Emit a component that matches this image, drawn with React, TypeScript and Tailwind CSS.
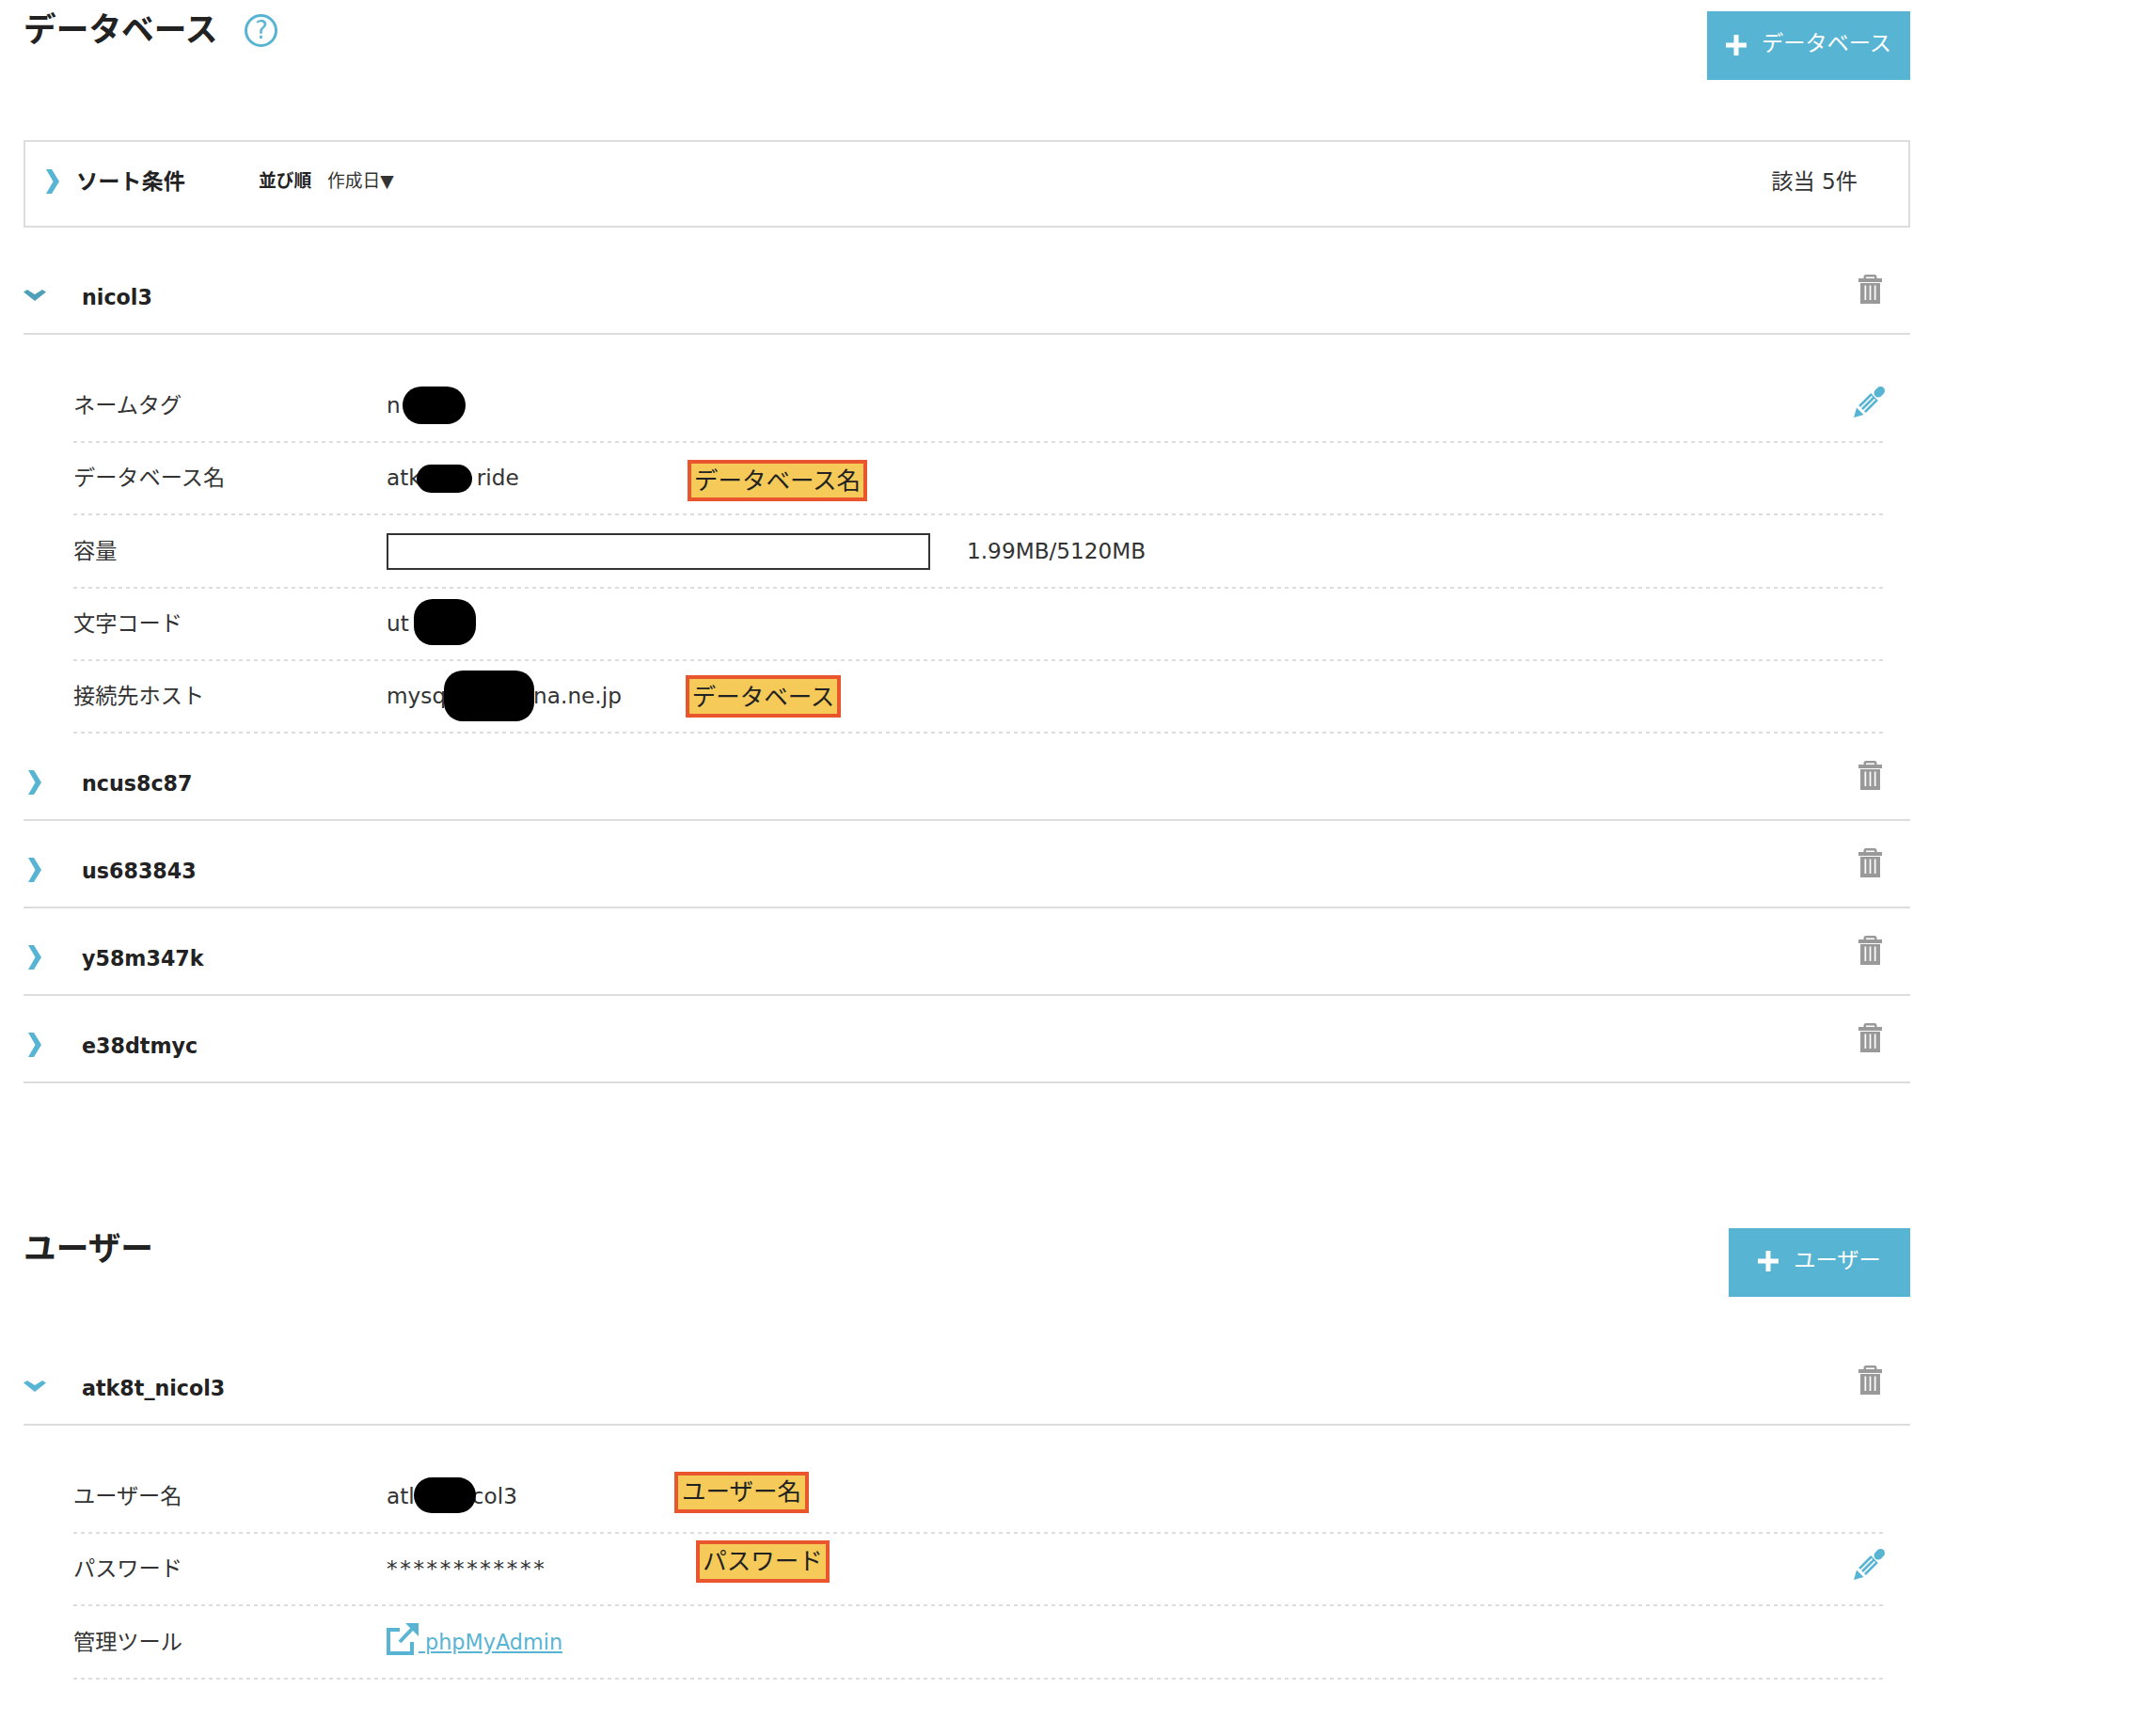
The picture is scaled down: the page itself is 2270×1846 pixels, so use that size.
import type { ReactNode } from "react";

const TrashIcon = () => (
  <svg width="25" height="31" viewBox="0 0 25 31" className="shrink-0">
    <path fill="#999" fillRule="evenodd" d="M8 0h9a2.500 2.500 0 0 1 2.500 2.500V4H25v4H0V4h5.500V2.500A2.500 2.500 0 0 1 8 0zM8 2.500V4h9V2.500z" />
    <path fill="#999" fillRule="evenodd" d="M2 9h21v22H2zM6.500 11.500v15.500h1.700V11.500zM11.650 11.500v15.500h1.700V11.500zM16.800 11.500v15.500h1.700V11.500z" />
  </svg>
);

const PencilIcon = () => (
  <svg width="33" height="33" viewBox="0 0 33 33" className="shrink-0">
    <path d="M26 7L28.500 4.500" stroke="#58b4d3" strokeWidth="9" strokeLinecap="round" />
    <path d="M9 24L22 11" stroke="#58b4d3" strokeWidth="11" />
    <path d="M6.500 23.500L19.500 10.500M9.500 26.500L22.500 13.500" stroke="#fff" strokeWidth="1.700" />
    <path d="M0 33l3-10.500 7.500 7.500z" fill="#58b4d3" />
  </svg>
);

const Chevron = ({ open, tone = "#58b4d3" }: { open?: boolean; tone?: string }) =>
  open ? (
    <svg width="24" height="12" viewBox="0 0 24 12" className="shrink-0">
      <path d="M0 2.500L4 0l8 5 8-5 4 2.500L12 12z" fill={tone} />
    </svg>
  ) : (
    <svg width="14" height="26" viewBox="0 0 14 26" className="shrink-0">
      <path d="M0 0h6l8 13-8 13H0l7.500-13z" fill={tone} />
    </svg>
  );

const Blob = ({ className }: { className: string }) => (
  <span className={`absolute bg-black ${className}`} />
);

const Tag = ({ children, className }: { children: ReactNode; className: string }) => (
  <span
    className={`absolute flex items-center justify-center border-4 border-[#e9562e] bg-[#f5ca59] text-[25.500px] whitespace-nowrap text-[#222] ${className}`}
  >
    {children}
  </span>
);

const DetailRow = ({ label, children }: { label: string; children: ReactNode }) => (
  <div className="relative ml-[53px] mr-[26px] flex h-[77.200px] items-center bg-[repeating-linear-gradient(90deg,#ddd_0_4px,transparent_4px_8px)] bg-[length:100%_2px] bg-bottom bg-no-repeat pb-[2px] text-[23.200px]">
    <div className="w-[333px] shrink-0">{label}</div>
    <div className="relative flex h-0 items-center whitespace-nowrap">{children}</div>
  </div>
);

const RowHead = ({
  name,
  open,
  tone,
}: {
  name: string;
  open?: boolean;
  tone?: string;
}) => (
  <div className="flex h-[93px] items-start border-b-2 border-[#ddd]">
    <div className={`flex w-[62px] shrink-0 ${open ? "mt-[45px]" : "mt-[39px] pl-[5px]"}`}>
      <Chevron open={open} tone={tone} />
    </div>
    <div className="mt-[35px] text-[22.200px] leading-[36px] font-bold text-[#222]">{name}</div>
    <div className="mt-[29px] mr-[30px] ml-auto">
      <TrashIcon />
    </div>
  </div>
);

const AddButton = ({ label, className }: { label: string; className: string }) => (
  <button className={`flex h-[73px] items-center justify-center gap-[16px] bg-[#58b4d3] pb-[4px] text-[23.200px] text-white ${className}`}>
    <svg width="22" height="22" viewBox="0 0 22 22" className="mt-[2px]">
      <path d="M8.500 0h5v8.500H22v5h-8.500V22h-5v-8.500H0v-5h8.500z" fill="#fff" />
    </svg>
    {label}
  </button>
);

export default function App() {
  return (
    <div className="min-h-[1846px] w-[2270px] bg-white text-[#333] [font-family:'DejaVu_Sans','Noto_Sans_CJK_JP',sans-serif]">
      <div className="w-[2031px] pt-[12px] pl-[25px]">
        {/* データベース */}
        <div className="flex items-start justify-between">
          <div className="flex items-center gap-[29px]">
            <h1 className="text-[34.700px] leading-[40px] font-bold text-[#222]">データベース</h1>
            <span className="flex h-[35px] w-[35px] items-center justify-center rounded-full border-[3px] border-[#58b4d3] text-[26px] text-[#58b4d3]">
              ?
            </span>
          </div>
          <AddButton label="データベース" className="w-[216px]" />
        </div>

        <div className="mt-[64px] flex h-[93px] items-center border-2 border-[#ddd] pb-[5px]">
          <div className="ml-[22px] flex w-[32px] shrink-0">
            <Chevron />
          </div>
          <div className="w-[194px] shrink-0 text-[23.200px] font-bold text-[#222]">ソート条件</div>
          <div className="w-[73px] shrink-0 text-[18.800px] font-bold text-[#222]">並び順</div>
          <div className="text-[18.800px]">作成日▼</div>
          <div className="mr-[54px] ml-auto text-[23.200px]">該当 5件</div>
        </div>

        <div className="mt-[21px]">
          <RowHead name="nicol3" open tone="#4f9fb8" />
          <div className="pt-[38px]">
            <DetailRow label="ネームタグ">
              n
              <Blob className="top-[-21px] left-[17px] h-[40px] w-[67px] rounded-[20px]" />
              <div className="absolute top-[-21px] left-[1560px]">
                <PencilIcon />
              </div>
            </DetailRow>
            <DetailRow label="データベース名">
              <span>atk</span>
              <span className="ml-[59px]">ride</span>
              <Blob className="top-[-15px] left-[32px] h-[30px] w-[59px] rounded-[15px]" />
              <Tag className="top-[-20px] left-[320px] h-[44px] w-[191px]">データベース名</Tag>
            </DetailRow>
            <DetailRow label="容量">
              <div className="mt-[2px] h-[39px] w-[578px] border-2 border-[#333]" />
              <span className="ml-[39px]">1.99MB/5120MB</span>
            </DetailRow>
            <DetailRow label="文字コード">
              ut
              <Blob className="top-[-26px] left-[29px] h-[49px] w-[66px] rounded-[20px]" />
            </DetailRow>
            <DetailRow label="接続先ホスト">
              <span>mysq</span>
              <span className="ml-[93px]">na.ne.jp</span>
              <Blob className="top-[-27px] left-[61px] h-[54px] w-[96px] rounded-[20px]" />
              <Tag className="top-[-22px] left-[318px] h-[45px] w-[165px]">データベース</Tag>
            </DetailRow>
          </div>
          <RowHead name="ncus8c87" />
          <RowHead name="us683843" />
          <RowHead name="y58m347k" />
          <RowHead name="e38dtmyc" />
        </div>

        {/* ユーザー */}
        <div className="mt-[154px] flex items-start justify-between">
          <h2 className="text-[34.700px] leading-[45px] font-bold text-[#222]">ユーザー</h2>
          <AddButton label="ユーザー" className="w-[193px]" />
        </div>

        <div className="mt-[44px]">
          <RowHead name="atk8t_nicol3" open />
          <div className="pt-[38px]">
            <DetailRow label="ユーザー名">
              <span>atl</span>
              <span className="ml-[61px]">col3</span>
              <Blob className="top-[-21px] left-[29px] h-[38px] w-[66px] rounded-[19px]" />
              <Tag className="top-[-27px] left-[306px] h-[44px] w-[143px]">ユーザー名</Tag>
            </DetailRow>
            <DetailRow label="パスワード">
              <span className="tracking-[2.600px]">************</span>
              <Tag className="top-[-31px] left-[329px] h-[45px] w-[142px]">パスワード</Tag>
              <div className="absolute top-[-22px] left-[1560px]">
                <PencilIcon />
              </div>
            </DetailRow>
            <DetailRow label="管理ツール">
              <a className="flex items-end text-[22.300px] text-[#58b4d3] underline">
                <svg width="34" height="34" viewBox="0 0 34 34" className="mb-[5px] shrink-0">
                  <path d="M14 7H2v25h25V20" fill="none" stroke="#58b4d3" strokeWidth="4" />
                  <path d="M14 20L30 3" fill="none" stroke="#58b4d3" strokeWidth="4" />
                  <path d="M20 0h14v14z" fill="#58b4d3" />
                </svg>
                <span className="mb-[2px] whitespace-pre"> phpMyAdmin</span>
              </a>
            </DetailRow>
          </div>
        </div>
      </div>
    </div>
  );
}
